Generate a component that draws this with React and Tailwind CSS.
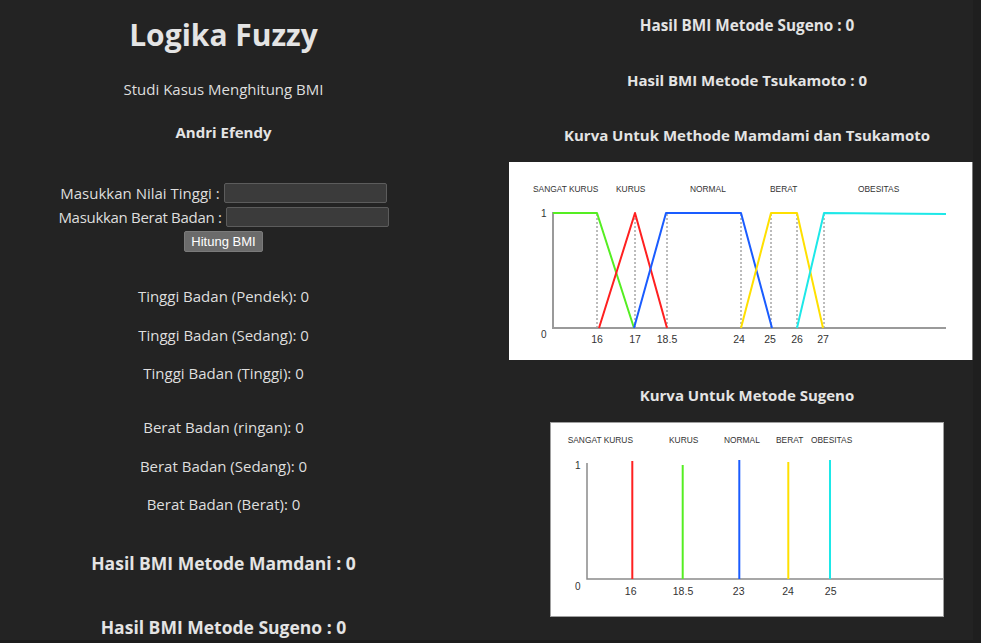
import React from 'react';

const FONT = "font-['Open_Sans',sans-serif]";

function KurvaMamdani() {
  const dashes = [88, 126, 158, 232, 262, 288, 315];
  const ticks = [
    ['16', 88],
    ['17', 126],
    ['18.5', 158],
    ['24', 230],
    ['25', 261],
    ['26', 288],
    ['27', 314],
  ];
  const labels = [
    ['SANGAT KURUS', 24],
    ['KURUS', 107],
    ['NORMAL', 181],
    ['BERAT', 261],
    ['OBESITAS', 349],
  ];
  return (
    <svg width="463" height="198" viewBox="0 0 463 198" className="block">
      <g fontFamily="'Liberation Sans', Arial, sans-serif" fill="#333">
        {labels.map(([t, x]) => (
          <text key={t} x={x} y="29.5" fontSize="8.4">{t}</text>
        ))}
        <text x="32" y="54.5" fontSize="10">1</text>
        <text x="32" y="176" fontSize="10">0</text>
        {ticks.map(([t, x]) => (
          <text key={t} x={x} y="181" fontSize="10.5" textAnchor="middle">{t}</text>
        ))}
      </g>
      {dashes.map((x) => (
        <line key={x} x1={x} y1="52" x2={x} y2="166" stroke="#555" strokeWidth="0.8" strokeDasharray="2 2" />
      ))}
      <polyline points="44,50 44,166 437,166" fill="none" stroke="#9a9a9a" strokeWidth="2" />
      <g fill="none" strokeWidth="2" strokeLinejoin="round">
        <polyline points="44,51 88,51 125,166" stroke="#55ee22" />
        <polyline points="90,166 126,51 158,166" stroke="#ff2020" />
        <polyline points="125,166 157,51 232,51 263,166" stroke="#1a5cff" />
        <polyline points="232,166 262,51 288,51 314,166" stroke="#ffe000" />
        <polyline points="288,166 315,51 437,52" stroke="#1de8e8" />
      </g>
    </svg>
  );
}

function KurvaSugeno() {
  const labels = [
    ['SANGAT KURUS', 17.7, 21],
    ['KURUS', 119, 21],
    ['NORMAL', 174, 20.5],
    ['BERAT', 226, 21],
    ['OBESITAS', 261, 21],
  ];
  const bars = [
    [82.3, 39, '#ff2020'],
    [132.7, 43, '#55ee22'],
    [189.3, 38, '#1a5cff'],
    [238.3, 40, '#ffe000'],
    [280, 38, '#1de8e8'],
  ];
  const ticks = [
    ['16', 80.7],
    ['18.5', 133],
    ['23', 188.7],
    ['24', 238],
    ['25', 280.7],
  ];
  return (
    <svg width="392" height="193" viewBox="1 1 392 193" className="block">
      <g fontFamily="'Liberation Sans', Arial, sans-serif" fill="#333">
        {labels.map(([t, x, y]) => (
          <text key={t} x={x} y={y} fontSize="8.4">{t}</text>
        ))}
        <text x="25" y="46.5" fontSize="10">1</text>
        <text x="25" y="167.5" fontSize="10">0</text>
        {ticks.map(([t, x]) => (
          <text key={t} x={x} y="172.5" fontSize="10.5" textAnchor="middle">{t}</text>
        ))}
      </g>
      <polyline points="37,41 37,157 394,157" fill="none" stroke="#8a8a8a" strokeWidth="1.5" />
      {bars.map(([x, y, c]) => (
        <line key={x} x1={x} y1={y} x2={x} y2="157" stroke={c} strokeWidth="2" />
      ))}
    </svg>
  );
}

function Nilai({ children, className = '' }) {
  return <p className={`text-[15px] leading-6 text-[#dedede] ${className}`}>{children}</p>;
}

export default function App() {
  return (
    <div className={`w-[981px] h-[643px] overflow-hidden bg-[#232323] flex flex-col ${FONT}`}>
      <div className="flex flex-1 min-h-0">
        <div className="flex-1 overflow-hidden flex">
          {/* Kolom kiri: input dan derajat keanggotaan */}
          <div className="w-[447px] shrink-0 text-center text-[#e4e4e4]">
            <h1 className="mt-[15px] text-[30px] leading-10 font-bold">Logika Fuzzy</h1>
            <Nilai className="mt-[22px]">Studi Kasus Menghitung BMI</Nilai>
            <p className="mt-[19px] text-[15px] leading-6 font-bold">Andri Efendy</p>

            <div className="mt-[37px] text-[15px] text-[#dedede]">
              <div className="h-6 flex items-center justify-center gap-[4px]">
                <span>Masukkan Nilai Tinggi :</span>
                <input className="w-[163px] h-[20px] bg-[#3b3b3b] border border-[#5c5c5c] rounded-[2px]" />
              </div>
              <div className="h-6 flex items-center justify-center gap-[4px]">
                <span className="tracking-[-0.3px]">Masukkan Berat Badan :</span>
                <input className="w-[163px] h-[20px] bg-[#3b3b3b] border border-[#5c5c5c] rounded-[2px]" />
              </div>
              <button className="mt-[2px] h-[21px] px-[6px] bg-[#6b6b6b] border border-[#7a7a7a] rounded-[2px] text-[13px] text-white font-['Liberation_Sans',Arial,sans-serif]">
                Hitung BMI
              </button>
            </div>

            <Nilai className="mt-[32px]">Tinggi Badan (Pendek): 0</Nilai>
            <Nilai className="mt-[14.5px]">Tinggi Badan (Sedang): 0</Nilai>
            <Nilai className="mt-[14.5px]">Tinggi Badan (Tinggi): 0</Nilai>

            <Nilai className="mt-[30px]">Berat Badan (ringan): 0</Nilai>
            <Nilai className="mt-[14.5px]">Berat Badan (Sedang): 0</Nilai>
            <Nilai className="mt-[14px]">Berat Badan (Berat): 0</Nilai>

            <h3 className="mt-[33px] text-[17.5px] leading-7 font-bold">Hasil BMI Metode Mamdani : 0</h3>
            <h3 className="mt-[36px] text-[17.5px] leading-7 font-bold">Hasil BMI Metode Sugeno : 0</h3>
          </div>

          {/* Kolom kanan: hasil dan kurva */}
          <div className="w-[600px] shrink-0 text-center text-[#e4e4e4]">
            <h4 className="mt-[13px] text-[15.3px] leading-6 font-bold">Hasil BMI Metode Sugeno : 0</h4>
            <h4 className="mt-[31px] text-[15px] leading-6 font-bold">Hasil BMI Metode Tsukamoto : 0</h4>
            <h4 className="mt-[31px] text-[15px] leading-6 font-bold">Kurva Untuk Methode Mamdami dan Tsukamoto</h4>
            <div className="mt-[15px] ml-[62px] w-[464px] h-[198px] bg-white border-r border-[#7a7a7a]">
              <KurvaMamdani />
            </div>
            <h4 className="mt-[23px] text-[15px] leading-6 font-bold">Kurva Untuk Metode Sugeno</h4>
            <div className="mt-[15px] ml-[103px] w-[394px] h-[195px] bg-white border border-[#a0a0a0]">
              <KurvaSugeno />
            </div>
          </div>
        </div>
        <div className="w-[8px] shrink-0 bg-[#1f1f1f]" />
      </div>
      <div className="h-[3px] shrink-0 bg-[#1c1c1c]" />
    </div>
  );
}
